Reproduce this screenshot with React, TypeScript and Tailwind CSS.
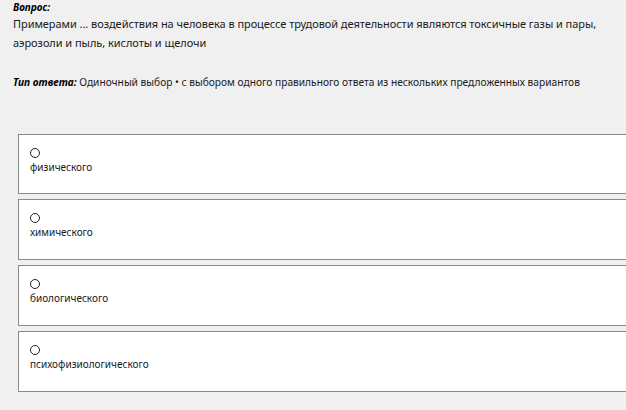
import React from "react";

const options = ["физического", "химического", "биологического", "психофизиологического"];

export default function App() {
  return (
    <div
      className="w-[626px] h-[410px] overflow-hidden bg-[#f0f0f0] text-[#1a1a1a]"
      style={{ fontFamily: '"Noto Sans", "Open Sans", sans-serif' }}
    >
      <div className="pl-[13px] pt-[1px]">
        <div className="text-[10px] leading-[13px] font-bold italic text-black">Вопрос:</div>
        <div className="text-[11px] leading-[19px] tracking-[-0.05px]">
          Примерами ... воздействия на человека в процессе трудовой деятельности являются токсичные газы и пары, аэрозоли и пыль, кислоты и щелочи
        </div>
        <div className="mt-[23px] text-[10.2px] leading-[14px]">
          <span className="font-bold italic text-black">Тип ответа:</span> Одиночный выбор • с выбором одного правильного ответа из нескольких предложенных вариантов
        </div>
      </div>
      <div className="mt-[45px] ml-[18px] flex flex-col gap-[5px]">
        {options.map((o, i) => (
          <div
            key={o}
            className={`${i === 0 ? "h-[60px]" : "h-[61px]"} bg-white border border-r-0 border-[#8a8a8a] pl-[11px] pt-[13px]`}
          >
            <div className="w-[10px] h-[10px] rounded-full border border-[#222]" />
            <div className="text-[10px] leading-[14px] mt-[2px]">{o}</div>
          </div>
        ))}
      </div>
    </div>
  );
}
